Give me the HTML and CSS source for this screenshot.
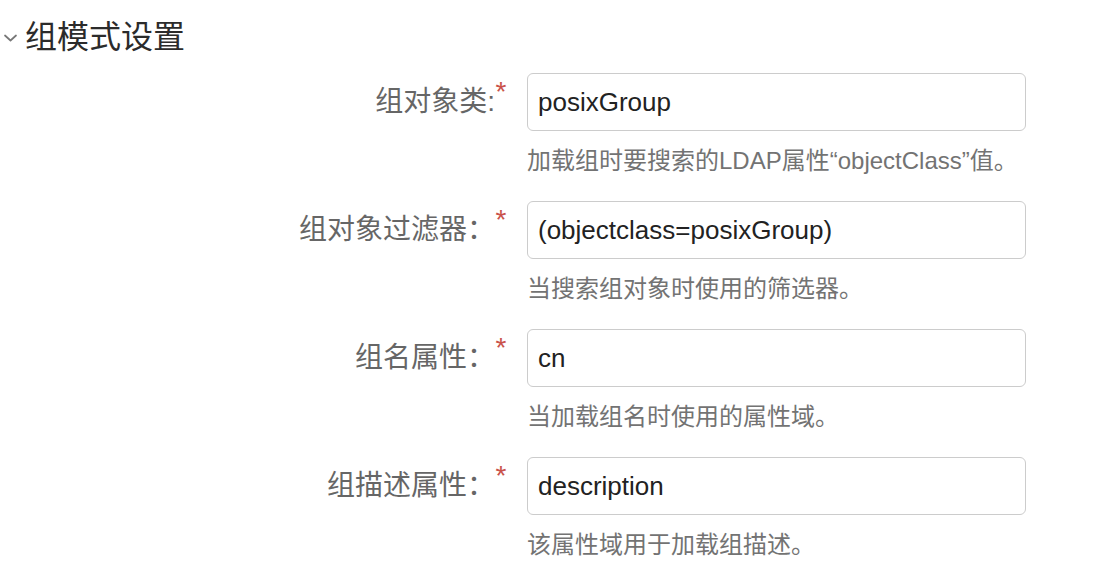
FILE: index.html
```html
<!DOCTYPE html>
<html lang="zh-CN">
<head>
<meta charset="utf-8">
<title>组模式设置</title>
<link rel="stylesheet" href="styles.css">
</head>
<body>
<div class="section-head">
  <svg class="chevron" width="13" height="8" viewBox="0 0 13 8"><path d="M1 1.5 L6.5 6.5 L12 1.5" fill="none" stroke="#777" stroke-width="1.7" stroke-linecap="round" stroke-linejoin="round"/></svg>
  <h2 class="section-title">组模式设置</h2>
</div>
<form class="form">
  <div class="form-row">
    <label class="form-label"><span class="label-text">组对象类:</span><span class="req">*</span></label>
    <div class="form-input">posixGroup</div>
    <div class="form-help">加载组时要搜索的LDAP属性“objectClass”值。</div>
  </div>
  <div class="form-row">
    <label class="form-label"><span class="label-text">组对象过滤器：</span><span class="req">*</span></label>
    <div class="form-input">(objectclass=posixGroup)</div>
    <div class="form-help">当搜索组对象时使用的筛选器。</div>
  </div>
  <div class="form-row">
    <label class="form-label"><span class="label-text">组名属性：</span><span class="req">*</span></label>
    <div class="form-input">cn</div>
    <div class="form-help">当加载组名时使用的属性域。</div>
  </div>
  <div class="form-row">
    <label class="form-label"><span class="label-text">组描述属性：</span><span class="req">*</span></label>
    <div class="form-input">description</div>
    <div class="form-help">该属性域用于加载组描述。</div>
  </div>
</form>
</body>
</html>
```
FILE: styles.css
```css
html, body {
  margin: 0;
  padding: 0;
  background: #fff;
}
body {
  font-family: "Liberation Sans", "Noto Sans CJK SC", sans-serif;
  color: #333;
}
.section-head {
  display: flex;
  align-items: center;
  height: 73px;
  padding-left: 4px;
}
.chevron {
  display: block;
  margin-right: 8px;
  margin-top: 2px;
}
.section-title {
  margin: 0;
  font-size: 32px;
  font-weight: normal;
  line-height: 40px;
  color: #2b2b2b;
}
.form {
  margin: 0;
}
.form-row {
  display: grid;
  grid-template-columns: 507px 499px;
  grid-template-rows: 58px auto;
  column-gap: 20px;
  margin-bottom: 23px;
}
.form-label {
  grid-column: 1;
  grid-row: 1;
  display: flex;
  justify-content: flex-end;
  align-items: center;
  font-size: 28px;
  color: #666;
}
.label-text {
  line-height: 58px;
}
.req {
  align-self: flex-start;
  width: 12px;
  margin-top: 5px;
  font-family: "Liberation Sans", sans-serif;
  font-size: 28px;
  line-height: 1;
  text-align: center;
  color: #c9524a;
}
.form-input {
  grid-column: 2;
  grid-row: 1;
  box-sizing: border-box;
  height: 58px;
  border: 1px solid #ccc;
  border-radius: 6px;
  padding: 0 10px;
  display: flex;
  align-items: center;
  font-size: 26px;
  color: #222;
}
.form-help {
  grid-column: 2;
  grid-row: 2;
  margin-top: 13px;
  font-size: 24px;
  line-height: 34px;
  color: #737373;
}
```
